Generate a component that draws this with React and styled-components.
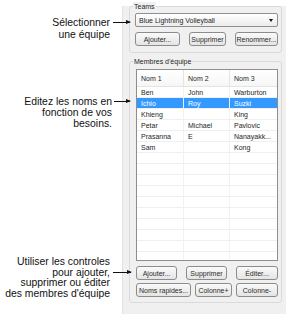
import React from "react"
import styled, { createGlobalStyle } from "styled-components"

const GlobalStyle = createGlobalStyle`
  body {
    margin: 0;
    background: #fff;
    font-family: "Liberation Sans", Arial, sans-serif;
  }
`

const Page = styled.div`
  position: relative;
  width: 293px;
  height: 323px;
  overflow: hidden;
`

const Panel = styled.div`
  margin-left: 122px;
  width: 164px;
  height: 308px;
  box-sizing: border-box;
  background: #f0f0f0;
  border-left: 1px solid #e2e2e2;
  padding: 0 4px 0 6px;
  font-family: "Liberation Sans", Arial, sans-serif;
  font-size: 7px;
  color: #1e1e1e;
`

const Group = styled.div`
  position: relative;
  margin-top: ${(p) => p.top}px;
  height: ${(p) => p.h}px;
  box-sizing: border-box;
  border: 1px solid #dadada;
  border-radius: 3px;
  padding: ${(p) => p.pad};
`

const Legend = styled.span`
  position: absolute;
  top: -5px;
  left: 3px;
  padding: 0 1px;
  background: #f0f0f0;
  line-height: 9px;
`

const Select = styled.div`
  display: flex;
  align-items: center;
  justify-content: space-between;
  height: 14px;
  box-sizing: border-box;
  border: 1px solid #8f8f8f;
  border-radius: 2px;
  background: linear-gradient(#ffffff, #ececec);
  padding: 0 4px 0 3px;
`

const Caret = styled.span`
  width: 0;
  height: 0;
  border-left: 2.5px solid transparent;
  border-right: 2.5px solid transparent;
  border-top: 3px solid #111;
`

const ButtonRow = styled.div`
  display: flex;
  justify-content: space-between;
  margin-top: ${(p) => p.mt}px;
`

const Button = styled.div`
  width: ${(p) => p.w}px;
  height: 14px;
  box-sizing: border-box;
  display: flex;
  align-items: center;
  justify-content: center;
  border: 1px solid #8c8c8c;
  border-radius: 3px;
  background: linear-gradient(#fafafa, #e4e4e4);
  white-space: nowrap;
  color: #2a2a2a;
`

const Table = styled.div`
  height: 192px;
  box-sizing: border-box;
  border: 1px solid #8e8e8e;
  background: #fff;
  overflow: hidden;
`

const Header = styled.div`
  display: grid;
  grid-template-columns: 47px 46px 49px;
  height: 16px;
  border-bottom: 1px solid #e4e4e4;
  background: linear-gradient(#ffffff, #f6f6f6);
`

const Row = styled.div`
  display: grid;
  grid-template-columns: 47px 46px 49px;
  height: 11px;
  box-sizing: border-box;
  border-bottom: 1px solid #efefef;
  background: ${(p) => (p.selected ? "#3399ff" : "#fff")};
  color: ${(p) => (p.selected ? "#fff" : "#1e1e1e")};
`

const Cell = styled.div`
  display: flex;
  align-items: center;
  padding-left: 4px;
  border-right: 1px solid ${(p) => (p.head ? "#e4e4e4" : "#f2f2f2")};
  white-space: nowrap;
  overflow: hidden;
  &:last-child {
    border-right: none;
  }
`

const Callout = styled.div`
  position: absolute;
  top: ${(p) => p.top}px;
  right: ${(p) => 293 - p.right}px;
  text-align: right;
  font-family: "Liberation Sans", Arial, sans-serif;
  font-size: 10.4px;
  line-height: ${(p) => p.lh || 11}px;
  color: #111;
  white-space: nowrap;
`

const Arrow = styled.div`
  position: absolute;
  top: ${(p) => p.top}px;
  left: ${(p) => p.left}px;
  width: ${(p) => p.w}px;
  height: 1px;
  background: #111;
  &::after {
    content: "";
    position: absolute;
    right: -1px;
    top: -2px;
    border-top: 2.5px solid transparent;
    border-bottom: 2.5px solid transparent;
    border-left: 5px solid #111;
  }
`

const members = [
  ["Ben", "John", "Warburton"],
  ["Ichio", "Roy", "Suzki"],
  ["Khieng", "", "King"],
  ["Petar", "Michael", "Pavlovic"],
  ["Prasanna", "E", "Nanayakk..."],
  ["Sam", "", "Kong"],
]

const rows = [...members, ...Array(10).fill(["", "", ""])]

export default function App() {
  return (
    <Page>
      <GlobalStyle />
      <Panel>
        <Group top={6} h={47} pad="6px 3px 0 5px">
          <Legend>Teams</Legend>
          <Select>
            <span>Blue Lightning Volleyball</span>
            <Caret />
          </Select>
          <ButtonRow mt={5}>
            <Button w={45}>Ajouter...</Button>
            <Button w={37}>Supprimer</Button>
            <Button w={43}>Renommer...</Button>
          </ButtonRow>
        </Group>
        <Group top={8} h={242} pad="7px 3px 0 6px">
          <Legend>Membres d'équipe</Legend>
          <Table>
            <Header>
              <Cell head>Nom 1</Cell>
              <Cell head>Nom 2</Cell>
              <Cell head>Nom 3</Cell>
            </Header>
            {rows.map((r, i) => (
              <Row key={i} selected={i === 1}>
                {r.map((c, j) => (
                  <Cell key={j}>{c}</Cell>
                ))}
              </Row>
            ))}
          </Table>
          <ButtonRow mt={5}>
            <Button w={41}>Ajouter...</Button>
            <Button w={41}>Supprimer</Button>
            <Button w={42}>Éditer...</Button>
          </ButtonRow>
          <ButtonRow mt={3}>
            <Button w={55}>Noms rapides...</Button>
            <Button w={37}>Colonne+</Button>
            <Button w={42}>Colonne-</Button>
          </ButtonRow>
        </Group>
      </Panel>

      <Callout top={17} right={110} lh={12}>
        Sélectionner
        <br />
        une équipe
      </Callout>
      <Arrow top={22} left={113} w={17} />

      <Callout top={96} right={112}>
        Editez les noms en
        <br />
        fonction de vos
        <br />
        besoins.
      </Callout>
      <Arrow top={101} left={114} w={16} />

      <Callout top={257} right={110} lh={10.5}>
        Utiliser les controles
        <br />
        pour ajouter,
        <br />
        supprimer ou éditer
        <br />
        des membres d'équipe
      </Callout>
      <Arrow top={272} left={113} w={18} />
    </Page>
  )
}
